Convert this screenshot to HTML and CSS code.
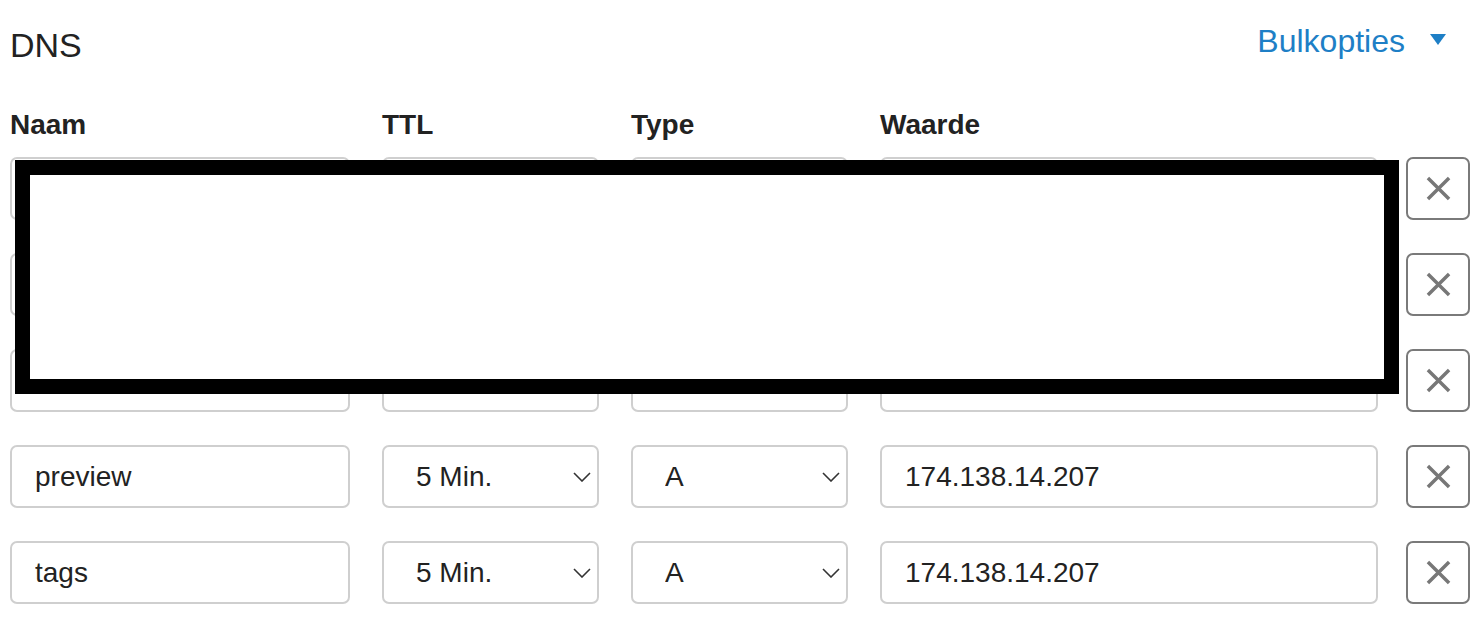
FILE: index.html
```html
<!DOCTYPE html>
<html lang="nl">
<head>
<meta charset="utf-8">
<title>DNS</title>
<link rel="stylesheet" href="styles.css">
</head>
<body>
<div class="page">
  <div class="topbar">
    <h2 class="title">DNS</h2>
    <a class="bulk" href="#">Bulkopties <span class="caret"></span></a>
  </div>

  <div class="grid">
    <div class="head">Naam</div>
    <div class="head">TTL</div>
    <div class="head">Type</div>
    <div class="head">Waarde</div>
    <div class="head"></div>

    <input class="field" type="text" value="">
    <div class="selwrap"><select class="field sel"><option>5 Min.</option></select><svg class="chev" viewBox="0 0 18 10"><path d="M1 1 L9 9 L17 1" /></svg></div>
    <div class="selwrap"><select class="field sel"><option>A</option></select><svg class="chev" viewBox="0 0 18 10"><path d="M1 1 L9 9 L17 1" /></svg></div>
    <input class="field" type="text" value="">
    <button class="del" type="button"><svg viewBox="0 0 26 26"><path d="M2 2 L24 24 M24 2 L2 24" /></svg></button>

    <input class="field" type="text" value="">
    <div class="selwrap"><select class="field sel"><option>5 Min.</option></select><svg class="chev" viewBox="0 0 18 10"><path d="M1 1 L9 9 L17 1" /></svg></div>
    <div class="selwrap"><select class="field sel"><option>A</option></select><svg class="chev" viewBox="0 0 18 10"><path d="M1 1 L9 9 L17 1" /></svg></div>
    <input class="field" type="text" value="">
    <button class="del" type="button"><svg viewBox="0 0 26 26"><path d="M2 2 L24 24 M24 2 L2 24" /></svg></button>

    <input class="field" type="text" value="">
    <div class="selwrap"><select class="field sel"><option>5 Min.</option></select><svg class="chev" viewBox="0 0 18 10"><path d="M1 1 L9 9 L17 1" /></svg></div>
    <div class="selwrap"><select class="field sel"><option>A</option></select><svg class="chev" viewBox="0 0 18 10"><path d="M1 1 L9 9 L17 1" /></svg></div>
    <input class="field" type="text" value="">
    <button class="del" type="button"><svg viewBox="0 0 26 26"><path d="M2 2 L24 24 M24 2 L2 24" /></svg></button>

    <input class="field" type="text" value="preview">
    <div class="selwrap"><select class="field sel"><option>5 Min.</option></select><svg class="chev" viewBox="0 0 18 10"><path d="M1 1 L9 9 L17 1" /></svg></div>
    <div class="selwrap"><select class="field sel"><option>A</option></select><svg class="chev" viewBox="0 0 18 10"><path d="M1 1 L9 9 L17 1" /></svg></div>
    <input class="field" type="text" value="174.138.14.207">
    <button class="del" type="button"><svg viewBox="0 0 26 26"><path d="M2 2 L24 24 M24 2 L2 24" /></svg></button>

    <input class="field" type="text" value="tags">
    <div class="selwrap"><select class="field sel"><option>5 Min.</option></select><svg class="chev" viewBox="0 0 18 10"><path d="M1 1 L9 9 L17 1" /></svg></div>
    <div class="selwrap"><select class="field sel"><option>A</option></select><svg class="chev" viewBox="0 0 18 10"><path d="M1 1 L9 9 L17 1" /></svg></div>
    <input class="field" type="text" value="174.138.14.207">
    <button class="del" type="button"><svg viewBox="0 0 26 26"><path d="M2 2 L24 24 M24 2 L2 24" /></svg></button>
  </div>

  <div class="redact"></div>
</div>
</body>
</html>
```
FILE: styles.css
```css
* { box-sizing: border-box; }

html, body {
  margin: 0;
  padding: 0;
  background: #fff;
}

body {
  font-family: "Liberation Sans", Arial, Helvetica, sans-serif;
  color: #222;
}

.page {
  position: relative;
  padding: 25px 11px 0 10px;
}

.topbar {
  display: flex;
  justify-content: space-between;
  align-items: flex-start;
  height: 40px;
}

.title {
  margin: 0;
  font-size: 34px;
  line-height: 40px;
  font-weight: normal;
  color: #222;
}

.bulk {
  display: flex;
  align-items: center;
  margin-top: -4px;
  margin-right: 24px;
  font-size: 32px;
  line-height: 40px;
  color: #1e7fc6;
  text-decoration: none;
}

.caret {
  display: inline-block;
  margin-left: 25px;
  margin-top: -4px;
  width: 0;
  height: 0;
  border-left: 8px solid transparent;
  border-right: 8px solid transparent;
  border-top: 11px solid #1e7fc6;
}

.grid {
  display: grid;
  grid-template-columns: 340px 217px 217px 498px 64px;
  column-gap: 32px;
  row-gap: 33px;
  margin-top: 44px;
}

.grid > :nth-child(5n) { margin-left: -4px; }

.head {
  font-size: 28px;
  line-height: 32px;
  font-weight: bold;
  color: #222;
  margin-bottom: -17px;
}

.field {
  display: block;
  width: 100%;
  height: 63px;
  margin: 0;
  padding: 0 0 0 23px;
  border: 2px solid #cfcfcf;
  border-radius: 7px;
  background: #fff;
  font-family: "Liberation Sans", Arial, Helvetica, sans-serif;
  font-size: 28px;
  color: #222;
  outline: none;
}

.selwrap {
  position: relative;
}

.sel {
  -webkit-appearance: none;
  appearance: none;
  padding-left: 32px;
}

.chev {
  position: absolute;
  right: 8px;
  top: 27px;
  width: 18px;
  height: 10px;
  fill: none;
  stroke: #333;
  stroke-width: 1.6;
  pointer-events: none;
}

.del {
  display: flex;
  align-items: center;
  justify-content: center;
  width: 64px;
  height: 63px;
  padding: 0;
  border: 2px solid #7a7a7a;
  border-radius: 7px;
  background: #fff;
}

.del svg {
  width: 25px;
  height: 25px;
  fill: none;
  stroke: #777;
  stroke-width: 3.6;
}

.redact {
  position: absolute;
  left: 15px;
  top: 160px;
  width: 1384px;
  height: 234px;
  border: 15px solid #000;
  background: #fff;
}
```
